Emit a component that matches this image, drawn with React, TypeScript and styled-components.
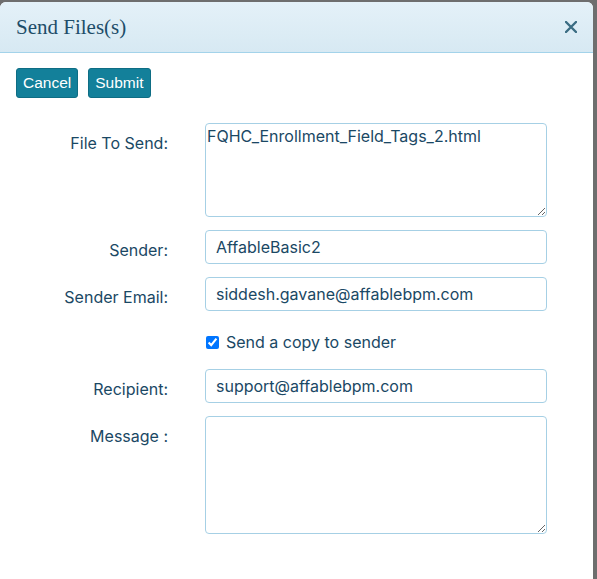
import React, { useState } from "react";
import styled, { createGlobalStyle } from "styled-components";

const GlobalStyle = createGlobalStyle`
  html, body {
    margin: 0;
    padding: 0;
    background: #6e6e6e;
    overflow: hidden;
  }
`;

const Backdrop = styled.div`
  height: 579px;
  padding-top: 2px;
  box-sizing: border-box;
`;

const Dialog = styled.div`
  width: 593px;
  height: 600px;
  background: #ffffff;
  border-radius: 6px 6px 0 0;
  overflow: hidden;
`;

const Header = styled.div`
  height: 50px;
  display: flex;
  align-items: center;
  justify-content: space-between;
  padding: 0 16px;
  background: linear-gradient(#e4f1f8, #d7e9f3);
  border-bottom: 1px solid #a3d3ea;
`;

const Title = styled.h4`
  margin: 0;
  font-family: "Liberation Serif", serif;
  font-weight: normal;
  font-size: 21px;
  color: #1d4d69;
  padding-top: 1px;
`;

const CloseButton = styled.button`
  border: 0;
  background: none;
  padding: 0;
  display: flex;
  cursor: pointer;
`;

const Body = styled.div`
  padding: 15px 16px;
`;

const Toolbar = styled.div`
  display: flex;
  gap: 10px;
`;

const ActionButton = styled.button`
  height: 30px;
  padding: 0 6px;
  background: #13809a;
  border: 1px solid #0e6d84;
  border-radius: 3px;
  color: #ffffff;
  font-family: "Liberation Sans", Arial, sans-serif;
  font-size: 15.5px;
  cursor: pointer;
`;

const Form = styled.div`
  display: grid;
  grid-template-columns: 152px 342px;
  column-gap: 37px;
  row-gap: 13px;
  margin-top: 25px;
  font-family: Inter, "Noto Sans", sans-serif;
  color: #1a4864;
`;

const Label = styled.label`
  text-align: right;
  font-size: 16px;
  line-height: 20px;
  padding-top: 10px;
`;

const TextInput = styled.input`
  box-sizing: border-box;
  height: 34px;
  width: 100%;
  padding: 0 10px;
  border: 1px solid #a6d0e5;
  border-radius: 4px;
  font-family: Inter, "Noto Sans", sans-serif;
  font-size: 16px;
  color: #1a4864;
  outline: none;
`;

const TextArea = styled.textarea<{ $height: number }>`
  box-sizing: border-box;
  height: ${(p) => p.$height}px;
  width: 100%;
  padding: 2px 1px;
  margin: 0;
  border: 1px solid #a6d0e5;
  border-radius: 4px;
  font-family: Inter, "Noto Sans", sans-serif;
  font-size: 16px;
  line-height: 20px;
  color: #1a4864;
  outline: none;
  display: block;
`;

const CheckRow = styled.label`
  grid-column: 2;
  display: flex;
  align-items: center;
  gap: 7px;
  height: 32px;
  padding-top: 4px;
  box-sizing: border-box;
  font-size: 16px;

  input {
    margin: 0 0 0 1px;
    width: 13px;
    height: 13px;
  }
`;

export default function App() {
  const [sender, setSender] = useState("AffableBasic2");
  const [email, setEmail] = useState("siddesh.gavane@affablebpm.com");
  const [copy, setCopy] = useState(true);
  const [recipient, setRecipient] = useState("support@affablebpm.com");
  const [message, setMessage] = useState("");

  return (
    <Backdrop>
      <GlobalStyle />
      <Dialog>
        <Header>
          <Title>Send Files(s)</Title>
          <CloseButton aria-label="Close">
            <svg width="12" height="12" viewBox="0 0 12 12">
              <path d="M1 1L11 11M11 1L1 11" stroke="#3b6d83" strokeWidth="2.4" strokeLinecap="round" />
            </svg>
          </CloseButton>
        </Header>
        <Body>
          <Toolbar>
            <ActionButton>Cancel</ActionButton>
            <ActionButton>Submit</ActionButton>
          </Toolbar>
          <Form>
            <Label>File To Send:</Label>
            <TextArea $height={94} readOnly value="FQHC_Enrollment_Field_Tags_2.html" />

            <Label>Sender:</Label>
            <TextInput value={sender} onChange={(e) => setSender(e.target.value)} />

            <Label>Sender Email:</Label>
            <TextInput value={email} onChange={(e) => setEmail(e.target.value)} />

            <CheckRow>
              <input type="checkbox" checked={copy} onChange={(e) => setCopy(e.target.checked)} />
              Send a copy to sender
            </CheckRow>

            <Label>Recipient:</Label>
            <TextInput value={recipient} onChange={(e) => setRecipient(e.target.value)} />

            <Label>Message :</Label>
            <TextArea $height={118} value={message} onChange={(e) => setMessage(e.target.value)} />
          </Form>
        </Body>
      </Dialog>
    </Backdrop>
  );
}
